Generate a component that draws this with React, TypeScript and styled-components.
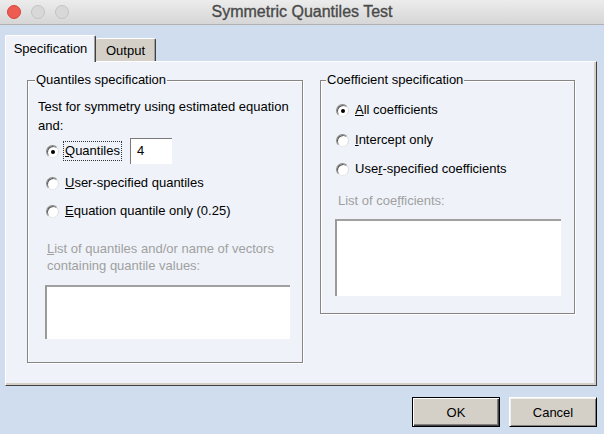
import React from 'react';
import styled, { createGlobalStyle } from 'styled-components';

const Global = createGlobalStyle`
  html, body { margin: 0; padding: 0; }
  body {
    width: 604px; height: 434px; overflow: hidden;
    background: #d0ddee;
    font-family: "Liberation Sans", Arial, sans-serif;
  }
`;

const Window = styled.div`
  width: 604px;
  height: 434px;
  display: flex;
  flex-direction: column;
  background: #d0ddee;
`;

const TitleBar = styled.div`
  flex: none;
  height: 24px;
  display: grid;
  grid-template-columns: 1fr auto 1fr;
  align-items: center;
  background: linear-gradient(#ececec, #d6d6d6);
  border-bottom: 1px solid #b1b1b1;
`;

const Lights = styled.div`
  display: flex;
  gap: 10px;
  padding-left: 7px;
`;

const Light = styled.span<{ $color: string; $edge: string }>`
  width: 14px;
  height: 14px;
  box-sizing: border-box;
  border-radius: 50%;
  background: ${p => p.$color};
  border: 1px solid ${p => p.$edge};
`;

const Title = styled.div`
  font-size: 16px;
  font-weight: 400;
  color: #4a4a4a;
  -webkit-text-stroke: 0.35px #4a4a4a;
  padding-bottom: 1px;
`;

const Body = styled.div`
  flex: 1;
  display: flex;
  flex-direction: column;
  padding: 10px 7px 7px 5px;
  min-height: 0;
`;

const TabStrip = styled.div`
  display: flex;
  align-items: flex-end;
  height: 26px;
  flex: none;
`;

const Tab = styled.div<{ $active?: boolean }>`
  box-sizing: border-box;
  font-size: 13px;
  color: #000;
  display: flex;
  align-items: center;
  justify-content: center;
  position: relative;
  z-index: ${p => (p.$active ? 2 : 1)};
  height: ${p => (p.$active ? '27px' : '23px')};
  margin-bottom: ${p => (p.$active ? '-1px' : '0')};
  width: ${p => (p.$active ? '91px' : '60px')};
  background: ${p => (p.$active ? '#eff3f9' : '#d4d0c8')};
  border-top: 1px solid #ffffff;
  border-left: ${p => (p.$active ? '1px solid #ffffff' : 'none')};
  border-right: 1px solid #404040;
  box-shadow: inset -1px 0 0 #a0a0a0;
  border-radius: 2px 2px 0 0;
  padding-bottom: ${p => (p.$active ? '1px' : '0')};
`;

const Panel = styled.div`
  flex: 1;
  box-sizing: border-box;
  background: #eff3f9;
  border-top: 1px solid #ffffff;
  border-left: 1px solid #ffffff;
  border-right: 1px solid #404040;
  border-bottom: 1px solid #404040;
  box-shadow: inset -2px -2px 0 #d4d0c8;
  padding: 18px 0 0 21px;
  display: grid;
  grid-template-columns: 276px 255px;
  column-gap: 17px;
  align-items: start;
`;

const Group = styled.div<{ $padLeft: number; $padBottom: number }>`
  box-sizing: border-box;
  border: 1px solid #858585;
  box-shadow: 1px 1px 0 #ffffff, inset 1px 1px 0 #ffffff;
  display: flex;
  flex-direction: column;
  align-items: flex-start;
  padding: 0 0 ${p => p.$padBottom}px ${p => p.$padLeft}px;
`;

const Legend = styled.div<{ $shift: number }>`
  font-size: 13px;
  line-height: 14px;
  height: 14px;
  margin-top: -8px;
  margin-left: ${p => p.$shift}px;
  padding: 0 1px;
  background: #eff3f9;
  color: #000;
`;

const Text = styled.div<{ $top: number; $left?: number; $disabled?: boolean; $lh?: number }>`
  font-size: 13px;
  line-height: ${p => p.$lh ?? 19}px;
  margin-top: ${p => p.$top}px;
  margin-left: ${p => p.$left ?? 0}px;
  color: ${p => (p.$disabled ? '#a0a0a0' : '#000')};
`;

const RadioRow = styled.div<{ $top: number; $left: number; $h?: number }>`
  display: flex;
  align-items: center;
  gap: 6px;
  height: ${p => p.$h ?? 20}px;
  margin-top: ${p => p.$top}px;
  margin-left: ${p => p.$left}px;
  font-size: 13px;
  color: #000;
`;

const RadioCircle = styled.span<{ $checked?: boolean }>`
  width: 13px;
  height: 13px;
  box-sizing: border-box;
  border-radius: 50%;
  flex: none;
  background: #ffffff;
  border: 1px solid;
  border-color: #8a8a8a #dcdcdc #e6e6e6 #8a8a8a;
  box-shadow: inset 1px 1px 0 #5a5a5a;
  display: flex;
  align-items: center;
  justify-content: center;
  &::after {
    content: '';
    display: ${p => (p.$checked ? 'block' : 'none')};
    width: 4px;
    height: 4px;
    border-radius: 50%;
    background: #000;
    margin: 1px 0 0 1px;
  }
`;

const Label = styled.span<{ $focus?: boolean }>`
  line-height: 16px;
  padding: 1px 1px;
  border: 1px dotted ${p => (p.$focus ? '#333' : 'transparent')};
  margin-left: -2px;
`;

const NumberBox = styled.div`
  box-sizing: border-box;
  width: 42px;
  height: 26px;
  margin-left: 2px;
  background: #fff;
  border-top: 1px solid #7a7a7a;
  border-left: 1px solid #7a7a7a;
  font-size: 13px;
  display: flex;
  align-items: center;
  padding: 0 0 2px 6px;
`;

const ListBox = styled.div<{ $top: number; $left: number; $w: number; $h: number }>`
  box-sizing: border-box;
  margin-top: ${p => p.$top}px;
  margin-left: ${p => p.$left}px;
  width: ${p => p.$w}px;
  height: ${p => p.$h}px;
  background: #ffffff;
  border-top: 2px solid #a0a0a0;
  border-left: 2px solid #9a9a9a;
`;

const Footer = styled.div`
  flex: none;
  display: flex;
  justify-content: flex-end;
  gap: 9px;
  margin-top: 11px;
`;

const Button = styled.div<{ $default?: boolean }>`
  box-sizing: border-box;
  width: 88px;
  height: 30px;
  display: flex;
  align-items: center;
  justify-content: center;
  font-size: 13px;
  color: #000;
  background: #d4d0c8;
  border: 1px solid ${p => (p.$default ? '#000' : '#ffffff')};
  border-right-color: #000;
  border-bottom-color: #000;
  box-shadow: ${p =>
    p.$default
      ? 'inset 1px 1px 0 #ffffff, inset -1px -1px 0 #404040, inset -2px -2px 0 #808080'
      : 'inset 1px 1px 0 #f0f0f0, inset -1px -1px 0 #808080'};
`;

export default function App() {
  return (
    <Window>
      <Global />
      <TitleBar>
        <Lights>
          <Light $color="#ee5b53" $edge="#d8453d" />
          <Light $color="#d8d8d8" $edge="#c4c4c4" />
          <Light $color="#d8d8d8" $edge="#c4c4c4" />
        </Lights>
        <Title>Symmetric Quantiles Test</Title>
        <div />
      </TitleBar>
      <Body>
        <TabStrip>
          <Tab $active>Specification</Tab>
          <Tab>Output</Tab>
        </TabStrip>
        <Panel>
          <Group $padLeft={10} $padBottom={23}>
            <Legend $shift={-3}>Quantiles specification</Legend>
            <Text $top={10}>
              Test for symmetry using estimated equation
              <br />
              and:
            </Text>
            <RadioRow $top={3} $left={8} $h={26}>
              <RadioCircle $checked />
              <Label $focus>
                <u>Q</u>uantiles
              </Label>
              <NumberBox>4</NumberBox>
            </RadioRow>
            <RadioRow $top={9} $left={8}>
              <RadioCircle />
              <Label>
                <u>U</u>ser-specified quantiles
              </Label>
            </RadioRow>
            <RadioRow $top={8} $left={8}>
              <RadioCircle />
              <Label>
                <u>E</u>quation quantile only (0.25)
              </Label>
            </RadioRow>
            <Text $top={19} $left={9} $lh={17} $disabled>
              <u>L</u>ist of quantiles and/or name of vectors
              <br />
              containing quantile values:
            </Text>
            <ListBox $top={11} $left={7} $w={245} $h={54} />
          </Group>
          <Group $padLeft={14} $padBottom={17}>
            <Legend $shift={-9}>Coefficient specification</Legend>
            <RadioRow $top={13} $left={1}>
              <RadioCircle $checked />
              <Label>
                <u>A</u>ll coefficients
              </Label>
            </RadioRow>
            <RadioRow $top={10} $left={1}>
              <RadioCircle />
              <Label>
                <u>I</u>ntercept only
              </Label>
            </RadioRow>
            <RadioRow $top={9} $left={1}>
              <RadioCircle />
              <Label>
                Use<u>r</u>-specified coefficients
              </Label>
            </RadioRow>
            <Text $top={13} $left={3} $lh={17} $disabled>
              List of coe<u>f</u>ficients:
            </Text>
            <ListBox $top={10} $left={0} $w={226} $h={77} />
          </Group>
        </Panel>
        <Footer>
          <Button $default>OK</Button>
          <Button>Cancel</Button>
        </Footer>
      </Body>
    </Window>
  );
}
